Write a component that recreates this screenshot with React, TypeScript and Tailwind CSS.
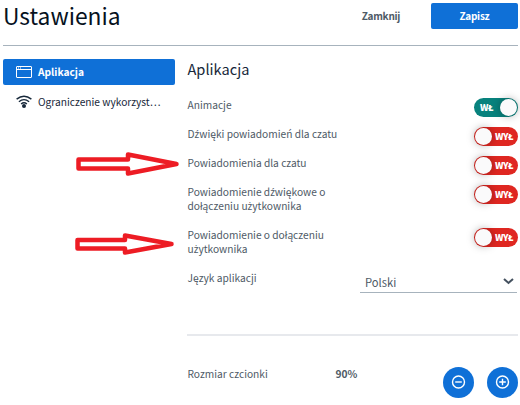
import React from "react";

function Toggle({ on = false }: { on?: boolean }) {
  return (
    <div
      role="switch"
      aria-checked={on}
      className={`flex h-[19px] w-11 shrink-0 items-center rounded-full p-px text-[9px] leading-none font-black text-white ${
        on ? "bg-[#08827d]" : "flex-row-reverse bg-[#df2721]"
      }`}
    >
      <span className={`flex-1 pb-px text-center tracking-[-0.5px] ${on ? "pr-0.5" : "pr-px"}`}>{on ? "WŁ" : "WYŁ"}</span>
      <span className="h-[17px] w-[17px] rounded-full bg-[#fafafb] shadow-[0_0_8px_rgba(0,0,0,0.35)]" />
    </div>
  );
}

// The main family has no ź or ż, so those letters take theirs from Noto Sans.
function Label({ text }: { text: string }) {
  return (
    <>
      {text.split(/([źż])/).map((part, i) =>
        i % 2 ? (
          <span key={i} className="font-['Noto_Sans',sans-serif] text-[10px] leading-none">
            {part}
          </span>
        ) : (
          part
        ),
      )}
    </>
  );
}

function SettingRow({ label, on }: { label: string; on?: boolean }) {
  return (
    <div className="flex items-start justify-between">
      <span className="w-[152px] pl-[0.5px] leading-[14px]">
        <Label text={label} />
      </span>
      <div className="-mb-5">
        <Toggle on={on} />
      </div>
    </div>
  );
}

function RoundButton({ plus = false }: { plus?: boolean }) {
  return (
    <button className="flex h-[31px] w-[31px] items-center justify-center rounded-full bg-[#0f70d7]">
      <svg width="15" height="15" viewBox="0 0 15 15" fill="none" stroke="white" strokeWidth="1.4">
        <circle cx="7.5" cy="7" r="6" />
        <path d={plus ? "M4.2 7h6.6M7.5 3.7v6.6" : "M4.2 7h6.6"} />
      </svg>
    </button>
  );
}

export default function App() {
  return (
    <div className="relative h-[405px] w-[520px] overflow-hidden bg-white pr-0.5 pl-[3px] font-['Noto_Sans_CJK_SC','Noto_Sans',sans-serif] text-[10.2px] text-[#4e5a66]">
      <header className="flex h-[46px] items-start justify-between border-b border-[#a7b3bd]">
        <h1 className="text-[22.8px] leading-[31px] text-[#06121e]">Ustawienia</h1>
        <div className="flex pt-[3px] font-bold">
          <button className="h-[26px] w-[100px] pb-px text-[10px] tracking-[-0.25px]">Zamknij</button>
          <button className="h-[26px] w-[87px] rounded-xs bg-[#0f70d7] pb-px text-[10px] tracking-[-0.25px] text-white">
            Zapisz
          </button>
        </div>
      </header>
      <div className="flex">
        <nav className="w-[172px] pt-[13px]">
          <div className="flex h-[26px] items-center rounded-xs bg-[#0f70d7] pl-[13px] font-bold text-white">
            <svg width="16" height="12" viewBox="0 0 16 12" fill="none" stroke="white" className="mr-1.5">
              <rect x="0.5" y="0.5" width="15" height="11" rx="0.5" />
              <path d="M1 3.5h14M2 2h1M4 2h1" />
            </svg>
            Aplikacja
          </div>
          <div className="mt-1 flex h-[26px] items-center pb-px pl-[13px] text-[#17283a]">
            <svg width="16" height="14" viewBox="0 0 16 14" fill="none" stroke="currentColor" strokeWidth="1.4" className="mr-1.5">
              <path d="M0.6 4.1Q8 -1.7 15.4 4.1M2.9 6.7Q8 2.6 13.1 6.7M5.1 9Q8 6.6 10.9 9" />
              <circle cx="8" cy="11" r="2" fill="currentColor" stroke="none" />
            </svg>
            Ograniczenie wykorzyst…
          </div>
        </nav>
        <main className="ml-3 flex-1 pt-[11px]">
          <h2 className="mb-[17px] pl-[0.5px] text-[14.6px] leading-6 text-[#17283a]">Aplikacja</h2>
          <div className="flex flex-col gap-[15px]">
            <SettingRow label="Animacje" on />
            <SettingRow label="Dźwięki powiadomień dla czatu" />
            <SettingRow label="Powiadomienia dla czatu" />
            <SettingRow label="Powiadomienie dźwiękowe o dołączeniu użytkownika" />
            <SettingRow label="Powiadomienie o dołączeniu użytkownika" />
            <div className="flex justify-between leading-[14px]">
              <span className="pl-[0.5px]">Język aplikacji</span>
              <div className="mr-px flex h-[22px] w-[157px] items-center justify-between border-b border-[#a7b3bd] pr-[3px] pl-[5px] text-[11.2px]">
                Polski
                <svg width="11" height="7" viewBox="0 0 11 7" fill="none" stroke="#44515f" strokeWidth="2">
                  <path d="M1 1l4.5 4L10 1" />
                </svg>
              </div>
            </div>
          </div>
          <div className="mt-[41px] h-0.5 bg-[#e7e9ed]" />
          <div className="mt-[31px] flex items-start">
            <span className="w-[148.5px] pl-[0.5px] leading-[14px]">Rozmiar czcionki</span>
            <span className="leading-[14px] font-bold">90%</span>
            <div className="ml-auto flex gap-[13px]">
              <RoundButton />
              <RoundButton plus />
            </div>
          </div>
        </main>
      </div>
      <svg className="pointer-events-none absolute top-0 left-0" width="520" height="405" fill="none" stroke="#ed1c24" strokeWidth="4.5" strokeLinejoin="round">
        <path d="M78.5 159.5H128V154.5L176.5 164L128 173.5V168.5H78.5Z" />
        <path d="M77.5 240H125V235.5L171.5 244L125 252.5V248.5H77.5Z" />
      </svg>
    </div>
  );
}
